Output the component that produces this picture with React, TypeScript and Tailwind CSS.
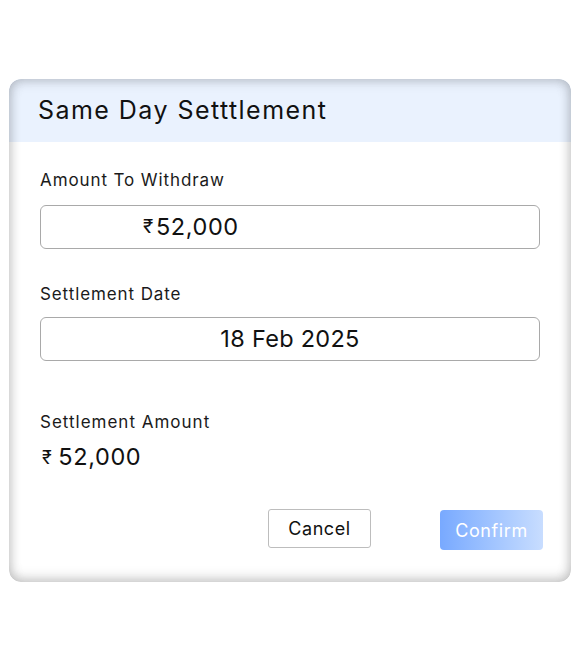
import React from "react";

const font = { fontFamily: "Inter, 'Noto Sans', sans-serif" };

export default function App() {
  return (
    <div className="min-h-[661px] w-[581px] bg-white pt-[79px] pl-[9px]" style={font}>
      <SettlementCard />
    </div>
  );
}

function SettlementCard() {
  return (
    <div className="relative w-[562px] h-[503px] rounded-[12px] overflow-hidden bg-white">
      {/* header */}
      <div className="h-[63px] bg-[#eaf2fe] flex items-center pl-[29px]">
        <h2 className="text-[25px] text-[#111] tracking-[1.45px]">Same Day Setttlement</h2>
      </div>

      <div className="flex flex-col px-[31px]">
        <label className="mt-[27px] text-[17px] leading-[22px] tracking-[0.9px] text-[#1a1a1a]">Amount To Withdraw</label>
        <div className="mt-[14px] h-[44px] w-[500px] rounded-[6px] border border-[#a9a9a9] flex items-center pl-[102px] text-[23.5px] tracking-[0.6px] text-[#111]">
          <span className="text-[19px] mr-[2px]">₹</span>52,000
        </div>

        <label className="mt-[34px] text-[17px] leading-[22px] tracking-[0.9px] text-[#1a1a1a]">Settlement Date</label>
        <div className="mt-[12px] h-[44px] w-[500px] rounded-[6px] border border-[#a9a9a9] flex items-center justify-center text-[23.5px] tracking-[0.3px] text-[#111]">
          18 Feb 2025
        </div>

        <label className="mt-[50px] text-[17px] leading-[22px] tracking-[1px] text-[#1a1a1a]">Settlement Amount</label>
        <div className="mt-[9px] h-[30px] flex items-center text-[23.5px] tracking-[0.6px] text-[#111]">
          <span className="text-[18px] mr-[6px] ml-[2px]">₹</span>52,000
        </div>

        <div className="mt-[37px] flex">
          <button
            type="button"
            className="shrink-0 ml-[228px] w-[103px] h-[39px] rounded-[3px] border border-[#bdbdbd] bg-white text-[18px] tracking-[0.6px] text-[#111]"
          >
            Cancel
          </button>
          <button
            type="button"
            className="shrink-0 ml-[69px] mt-[1px] w-[103px] h-[40px] rounded-[4px] bg-gradient-to-r from-[#78a9ff] to-[#c8ddff] text-[18px] tracking-[0.6px] text-white"
          >
            Confirm
          </button>
        </div>
      </div>

      {/* inset edge shading */}
      <div className="pointer-events-none absolute inset-0 rounded-[12px] shadow-[inset_0_-5px_12px_rgba(0,0,0,0.13),inset_0_4px_12px_rgba(0,0,0,0.10),inset_4px_0_12px_rgba(0,0,0,0.06),inset_-4px_0_12px_rgba(0,0,0,0.06)]" />
    </div>
  );
}
